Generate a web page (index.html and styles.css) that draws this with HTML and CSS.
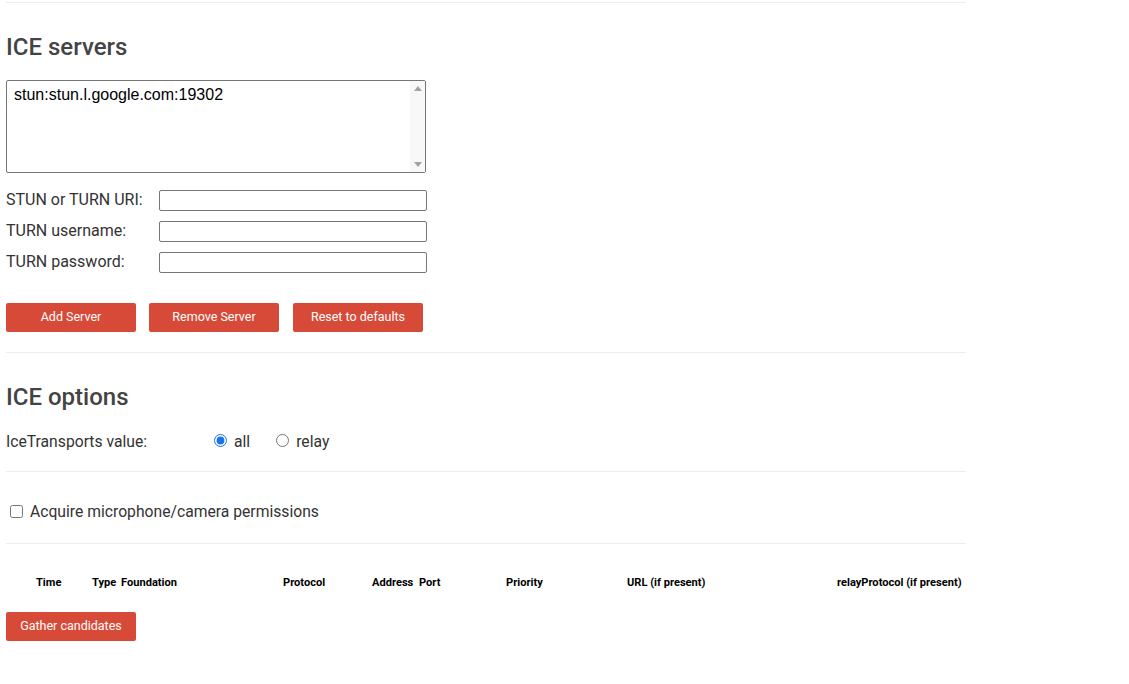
FILE: index.html
```html
<!DOCTYPE html>
<html lang="en">
<head>
    <meta charset="UTF-8">
    <title>Trickle ICE</title>
    <link rel="stylesheet" href="styles.css">
</head>
<body>

<div class="container">
    <hr class="rule first">

    <section class="servers">
        <h2>ICE servers</h2>
        <div class="server-list">
            <div class="options">
                <div class="option">stun:stun.l.google.com:19302</div>
            </div>
            <div class="scrollbar">
                <span class="arrow up"></span>
                <span class="arrow down"></span>
            </div>
        </div>

        <div class="fields">
            <div class="field"><label for="url">STUN or TURN URI:</label><input id="url" type="text"></div>
            <div class="field"><label for="username">TURN username:</label><input id="username" type="text"></div>
            <div class="field"><label for="password">TURN password:</label><input id="password" type="password"></div>
        </div>

        <div class="buttons">
            <button>Add Server</button>
            <button>Remove Server</button>
            <button>Reset to defaults</button>
        </div>
    </section>

    <hr class="rule">

    <section class="options-section">
        <h2>ICE options</h2>
        <div class="transports">
            <span class="transports-label">IceTransports value:</span>
            <input type="radio" id="all" name="transports" checked><label for="all">all</label>
            <input type="radio" id="relay" name="transports"><label for="relay">relay</label>
        </div>
    </section>

    <hr class="rule">

    <div class="permissions">
        <input type="checkbox" id="getUserMedia"><label for="getUserMedia">Acquire microphone/camera permissions</label>
    </div>

    <hr class="rule">

    <div class="candidates">
        <span class="col c-time">Time</span>
        <span class="col c-type">Type</span>
        <span class="col c-foundation">Foundation</span>
        <span class="col c-protocol">Protocol</span>
        <span class="col c-address">Address</span>
        <span class="col c-port">Port</span>
        <span class="col c-priority">Priority</span>
        <span class="col c-url">URL (if present)</span>
        <span class="col c-relay">relayProtocol (if present)</span>
    </div>

    <button class="gather">Gather candidates</button>
</div>

</body>
</html>
```

FILE: styles.css
```css
* {box-sizing: border-box;}
body {margin: 0; font-family: Roboto, "Noto Sans", sans-serif; color: #444; font-size: 16px;}
.container {width: 960px; margin: 0 6px;}
.rule {border: none; border-top: 1px solid #eee; margin: 0;}
.rule.first {margin-top: 2px;}
h2 {font-size: 24px; font-weight: 500; line-height: 28px; margin: 0;}

.servers {padding-top: 30px; padding-bottom: 20px;}
.servers h2 {margin-bottom: 19px;}
.server-list {display: flex; width: 420px; height: 93px; border: 1px solid #767676; border-radius: 2px;}
.options {flex: 1; padding: 4px 7px;}
.option {font-family: "Liberation Sans", Arial, sans-serif; font-size: 16px; color: #000; line-height: 19px;}
.scrollbar {width: 15px; background: #f8f8f8; display: flex; flex-direction: column; justify-content: space-between; align-items: center; padding: 5px 0;}
.arrow {width: 0; height: 0; border-left: 4px solid transparent; border-right: 4px solid transparent;}
.arrow.up {border-bottom: 5px solid #a3a3a3;}
.arrow.down {border-top: 5px solid #a3a3a3;}

.fields {margin-top: 17px; display: flex; flex-direction: column; gap: 10px;}
.field {display: flex; align-items: center; height: 21px;}
.field label {width: 153px; font-size: 16px; color: #333; line-height: 19px; padding-bottom: 2px;}
.field input {width: 268px; height: 21px; border: 1px solid #767676; border-radius: 2px; padding: 1px 2px; font-size: 13px;}

.buttons {display: flex; gap: 13px; margin-top: 30px;}
button {background-color: #d84a38; border: none; border-radius: 2px; color: #fff; font-family: Roboto, sans-serif; font-size: 12.5px; width: 130px; height: 29px; padding: 0 0 2px; cursor: pointer;}
.buttons button:nth-child(3) {margin-left: 1px;}

.options-section {padding-top: 30px; height: 118px;}
.options-section h2 {margin-bottom: 21px;}
.transports {display: flex; align-items: center; font-size: 15.7px; color: #333;}
.transports-label {width: 203px;}
.transports input {margin: 0 7px 2px 5px; width: 13px; height: 13px; accent-color: #1a73e8;}
.transports label {margin-right: 21px;}

.permissions {height: 71px; display: flex; align-items: center; font-size: 15.7px; color: #333; padding-top: 8px;}
.permissions input {margin: 0 7px 0 4px; width: 13px; height: 13px;}

.candidates {display: flex; padding-left: 30px; margin-top: 32px; height: 14px; font-size: 11.1px; font-weight: bold; color: #000; line-height: 14px;}
.col {flex: none;}
.c-time {width: 56px;}
.c-type {width: 29px;}
.c-foundation {width: 162px;}
.c-protocol {width: 89px;}
.c-address {width: 47px;}
.c-port {width: 87px;}
.c-priority {width: 121px;}
.c-url {width: 210px;}
.gather {margin-top: 22px; display: block;}
```
